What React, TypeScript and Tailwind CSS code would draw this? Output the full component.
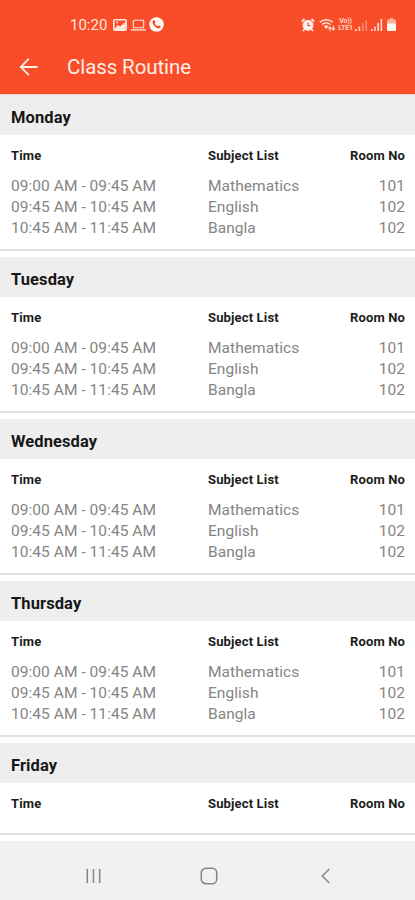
import clsx from "clsx";

// ─── Data ─────────────────────────────────────────────────────────────────────

interface Period {
  time: string;
  subject: string;
  room: string;
}

const PERIODS: Period[] = [
  { time: "09:00 AM - 09:45 AM", subject: "Mathematics", room: "101" },
  { time: "09:45 AM - 10:45 AM", subject: "English", room: "102" },
  { time: "10:45 AM - 11:45 AM", subject: "Bangla", room: "102" },
];

const ROUTINE: { day: string; periods: Period[] }[] = [
  { day: "Monday", periods: PERIODS },
  { day: "Tuesday", periods: PERIODS },
  { day: "Wednesday", periods: PERIODS },
  { day: "Thursday", periods: PERIODS },
  { day: "Friday", periods: [] },
];

// ─── Status bar ───────────────────────────────────────────────────────────────

function StatusBar() {
  return (
    <div className="flex h-[49px] items-center justify-between pr-[19px] pl-[70px] text-[#ffe9df]">
      <div className="flex items-center">
        <span className="w-[43px] text-[15px] leading-5">10:20</span>
        {/* Picture */}
        <svg width="14" height="12" viewBox="0 0 14 12" fill="none">
          <rect x="0.8" y="0.8" width="12.4" height="10.4" rx="1" stroke="currentColor" strokeWidth="1.6" />
          <path d="M1.5 10.5v-1L5 6l2 1.5L12.5 3v8H2z" fill="currentColor" />
          <circle cx="4.2" cy="3.6" r="1" fill="currentColor" />
        </svg>
        {/* Laptop */}
        <svg className="ml-1" width="15" height="12" viewBox="0 0 15 12" fill="none" stroke="currentColor">
          <rect x="2.3" y="1.3" width="10.4" height="7.4" rx="0.8" strokeWidth="1.1" />
          <path d="M0 10.9h15" strokeWidth="1.3" />
        </svg>
        {/* Call */}
        <svg className="ml-[3px]" width="15" height="15" viewBox="0 0 15 15">
          <circle cx="7.5" cy="7.5" r="7.3" fill="#fff7f2" />
          <path
            d="M4.2 3.5c.6-.6 1.2-.5 1.5.1l.7 1.4c.2.5-.6 1-.5 1.4.4 1.1 1.4 2.1 2.5 2.6.5.1.9-.7 1.4-.5l1.4.8c.6.3.6.9 0 1.4-1 1-2.5.6-3.9-.3C5.6 9.3 4.2 7.8 3.7 6.2c-.3-1-.2-2 .5-2.7z"
            fill="#f94c28"
          />
        </svg>
      </div>
      <div className="flex items-center">
        {/* Alarm */}
        <svg width="14" height="14" viewBox="0 0 14 14" fill="none" stroke="currentColor">
          <circle cx="7" cy="7.3" r="5" fill="#fff7f2" strokeWidth="1" />
          <path d="M7 4.5v3.2h2.4" stroke="#f94c28" strokeWidth="1.2" />
          <path d="M.8 3.7 3.5 1M13.2 3.7 10.5 1M3.6 11 2 13M10.4 11l1.6 2" strokeWidth="1.8" />
        </svg>
        {/* Wi-Fi with transfer arrows */}
        <svg className="ml-1" width="17" height="14" viewBox="0 0 17 14" fill="none" stroke="currentColor">
          <path d="M.8 4.2a9.5 9.5 0 0 1 12.8 0M3 6.5a6.3 6.3 0 0 1 8.4 0" strokeWidth="1.5" />
          <path d="M4.800 8.300a3.600 3.600 0 0 1 4.800 0L7.200 11z" fill="currentColor" stroke="none" />
          <path d="M11 13.2v-4M9.5 10.5 11 9l1.3 1.5M14.3 7.5V12M12.9 10.5l1.4 1.4 1.5-1.4" strokeWidth="1.1" />
        </svg>
        <span className="ml-[2px] flex w-[15px] flex-col items-center text-[7px] leading-[6.5px] font-bold tracking-[-0.2px] text-[#ffd5c5]">
          <span>Vo))</span>
          <span>LTE1</span>
        </span>
        {/* Signal, first SIM */}
        <svg className="ml-[2px]" width="13" height="12" viewBox="0 0 13 12" fill="currentColor">
          <path d="M0 10h2v2H0zM3.5 7.5h1.7V12H3.5z" opacity=".8" />
          <path d="M7 4h1.5v8H7zM10.5 1H12v11h-1.5z" opacity=".4" />
        </svg>
        {/* Signal, second SIM */}
        <svg className="ml-[3px]" width="12" height="12" viewBox="0 0 12 12" fill="currentColor">
          <path d="M0 10h1.5v2H0zM3.2 7.5h1.5V12H3.2zM6.4 4h1.5v8H6.4zM9.6 0h1.5v12H9.6z" />
        </svg>
        {/* Battery */}
        <svg className="ml-1" width="9" height="13" viewBox="0 0 9 13">
          <path d="M3 0h3v1.5H3zM0 2.5q0-1 1-1h7q1 0 1 1V6H0z" fill="#ffb197" />
          <path d="M0 5.5h9V12q0 1-1 1H1q-1 0-1-1z" fill="#fff7f2" />
        </svg>
      </div>
    </div>
  );
}

// ─── App bar ──────────────────────────────────────────────────────────────────

function AppBar() {
  return (
    <header className="h-[95px] shrink-0 border-b border-[#fbd5ca] bg-[#f94c28]">
      <StatusBar />
      <div className="flex h-[35px] items-center pl-[19px] text-[#ffeee6]">
        <button type="button" aria-label="Back" className="w-12">
          <svg width="19" height="18" viewBox="0 0 19 18" fill="none" stroke="currentColor" strokeWidth="1.8">
            <path d="M18.5 9H1.8M9.800.9 1.7 9l8.1 8.1" />
          </svg>
        </button>
        <h1 className="text-[20.5px] leading-7 tracking-[-0.1px]">Class Routine</h1>
      </div>
    </header>
  );
}

// ─── Day section ──────────────────────────────────────────────────────────────

const ROW = "grid grid-cols-[197px_1fr_auto] pr-[10px] pl-[11px]";

function DaySection({ day, periods }: { day: string; periods: Period[] }) {
  return (
    <section className={clsx("flex shrink-0 flex-col", periods.length > 0 ? "h-[162px]" : "h-[98px]")}>
      <h2 className="h-10 bg-[#eeeeee] pl-[11px] text-[16.5px] leading-[45px] font-bold tracking-[0.1px] text-[#171717]">
        {day}
      </h2>
      <div className="flex-1 border-b-2 border-[#dfe1e2] pt-[11px]">
        <div className={clsx(ROW, "h-[29.5px] text-[13px] leading-5 font-bold tracking-[0.15px] text-[#1c1c1c]")}>
          <span>Time</span>
          <span>Subject List</span>
          <span>Room No</span>
        </div>
        {periods.map((p) => (
          <div key={p.time} className={clsx(ROW, "text-[15.5px] leading-[21.4px] tracking-[0.05px] text-[#858585]")}>
            <span>{p.time}</span>
            <span>{p.subject}</span>
            <span>{p.room}</span>
          </div>
        ))}
      </div>
      <div className="h-[6px] bg-white" />
    </section>
  );
}

// ─── System navigation ────────────────────────────────────────────────────────

function NavigationBar() {
  return (
    <nav className="flex flex-1 items-center bg-[#f1f1f1] pt-[11px] pl-[86px] text-[#858585]">
      <svg width="15" height="16" viewBox="0 0 15 16" fill="none" stroke="currentColor" strokeWidth="1.5">
        <path d="M1.3 1v14M7.5 1v14M13.7 1v14" />
      </svg>
      <svg className="ml-[99px]" width="18" height="18" viewBox="0 0 18 18" fill="none" stroke="currentColor" strokeWidth="1.5">
        <rect x="1.3" y="1.3" width="15.4" height="15.4" rx="4.5" />
      </svg>
      <svg className="ml-[103px]" width="9" height="16" viewBox="0 0 9 16" fill="none" stroke="currentColor" strokeWidth="1.5">
        <path d="M8.3 1 1.3 8l7 7" />
      </svg>
    </nav>
  );
}

export default function App() {
  return (
    <div className="flex h-screen flex-col overflow-hidden bg-white font-[Roboto,sans-serif]">
      <AppBar />
      <main className="flex shrink-0 flex-col">
        {ROUTINE.map((r) => (
          <DaySection key={r.day} day={r.day} periods={r.periods} />
        ))}
      </main>
      <NavigationBar />
    </div>
  );
}
